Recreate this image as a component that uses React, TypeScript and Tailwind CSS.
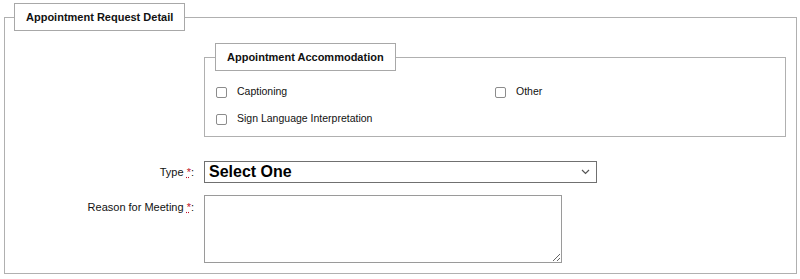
import React from 'react';

const font = { fontFamily: '"Liberation Sans", Arial, sans-serif' };

function Check({ label }: { label: string }) {
  return (
    <label className="flex h-[22px] items-center gap-[10px] text-[10.5px] text-[#111]">
      <span className="h-[11px] w-[11px] rounded-[2px] border border-[#8c8c8c] bg-white" />
      {label}
    </label>
  );
}

function Req() {
  return (
    <abbr title="required" className="text-[#c0102a] underline decoration-dotted">
      *
    </abbr>
  );
}

export default function App() {
  return (
    <div className="h-[279px] w-[800px] bg-white" style={font}>
      <fieldset className="ml-[4px] mt-[3px] w-[793px] border border-[#b0b0b0] pb-[10px]">
        <legend className="ml-[9px] flex h-[28px] items-center border border-[#a8a8a8] px-[11px] text-[11px] font-bold text-[#111]">
          Appointment Request Detail
        </legend>

        <fieldset className="ml-[199px] mt-[12px] w-[582px] border border-[#b0b0b0] pb-[6px] pt-[10px]">
          <legend className="ml-[10px] flex h-[28px] items-center border border-[#a8a8a8] px-[11px] text-[11px] font-bold text-[#111]">
            Appointment Accommodation
          </legend>
          <div className="grid grid-cols-[279px_1fr] gap-y-[5px] pl-[11px]">
            <Check label="Captioning" />
            <Check label="Other" />
            <Check label="Sign Language Interpretation" />
          </div>
        </fieldset>

        <div className="mt-[24px] flex items-center gap-[10px]">
          <label className="w-[189px] text-right text-[11px] text-[#111]">
            Type <Req />:
          </label>
          <div className="flex h-[22px] w-[393px] items-center justify-between border border-[#707070] pl-[4px] pr-[6px]">
            <span className="text-[16px] font-bold leading-none text-black">Select One</span>
            <svg width="9" height="6" viewBox="0 0 9 6" fill="none">
              <path d="M1 1l3.5 3.5L8 1" stroke="#555" strokeWidth="1.2" />
            </svg>
          </div>
        </div>

        <div className="mt-[12px] flex items-start gap-[10px]">
          <label className="w-[189px] pt-[4px] text-right text-[11px] text-[#111]">
            Reason for Meeting <Req />:
          </label>
          <textarea className="h-[68px] w-[358px] border border-[#9a9a9a] bg-white" />
        </div>
      </fieldset>
    </div>
  );
}
